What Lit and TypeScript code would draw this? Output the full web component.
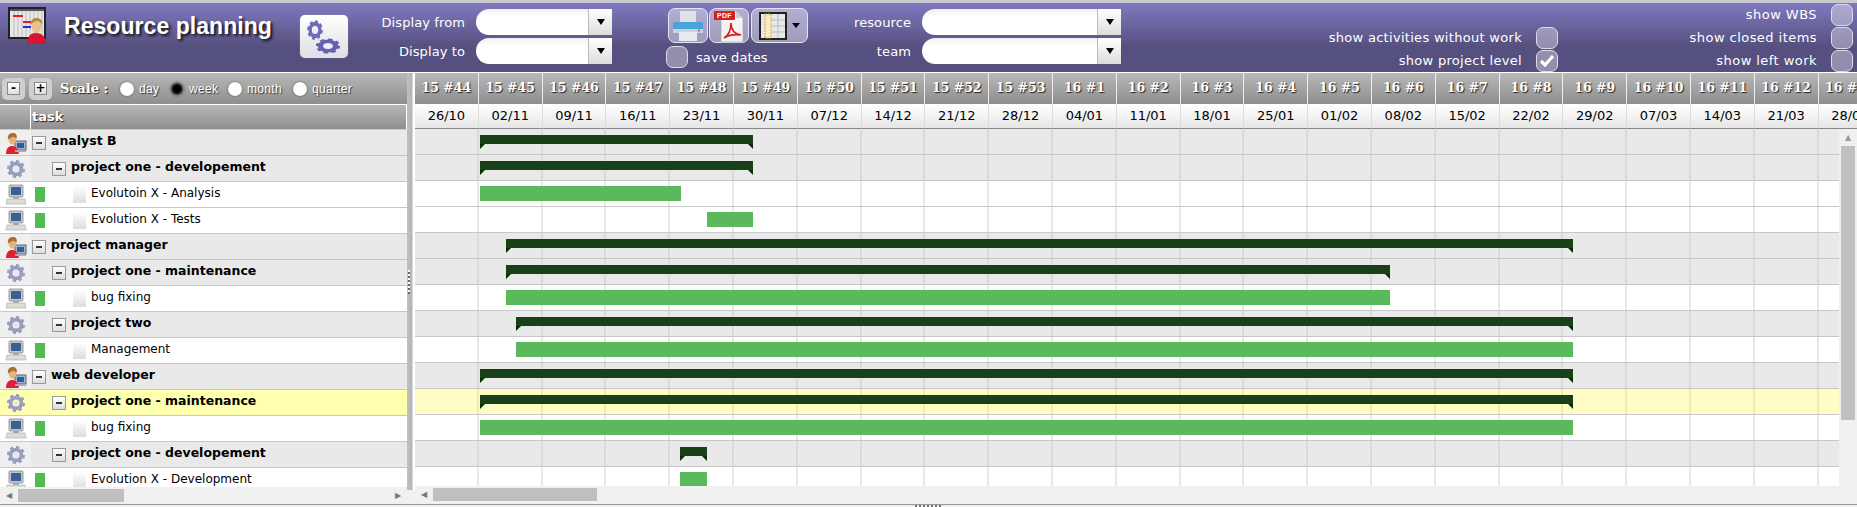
import { LitElement, html, css, svg } from "lit";
import { customElement } from "lit/decorators.js";

const WEEKS = ["15 #44","15 #45","15 #46","15 #47","15 #48","15 #49","15 #50","15 #51","15 #52","15 #53","16 #1","16 #2","16 #3","16 #4","16 #5","16 #6","16 #7","16 #8","16 #9","16 #10","16 #11","16 #12","16 #13"];
const DATES = ["26/10","02/11","09/11","16/11","23/11","30/11","07/12","14/12","21/12","28/12","04/01","11/01","18/01","25/01","01/02","08/02","15/02","22/02","29/02","07/03","14/03","21/03","28/03"];

type Row = { name: string; kind: "res" | "proj" | "task"; from: number; to: number; hl?: boolean };
const ROWS: Row[] = [
  { name: "analyst B", kind: "res", from: 480, to: 753 },
  { name: "project one - developement", kind: "proj", from: 480, to: 753 },
  { name: "Evolutoin X - Analysis", kind: "task", from: 480, to: 681 },
  { name: "Evolution X - Tests", kind: "task", from: 707, to: 753 },
  { name: "project manager", kind: "res", from: 506, to: 1573 },
  { name: "project one - maintenance", kind: "proj", from: 506, to: 1390 },
  { name: "bug fixing", kind: "task", from: 506, to: 1390 },
  { name: "project two", kind: "proj", from: 516, to: 1573 },
  { name: "Management", kind: "task", from: 516, to: 1573 },
  { name: "web developer", kind: "res", from: 480, to: 1573 },
  { name: "project one - maintenance", kind: "proj", from: 480, to: 1573, hl: true },
  { name: "bug fixing", kind: "task", from: 480, to: 1573 },
  { name: "project one - developement", kind: "proj", from: 680, to: 707 },
  { name: "Evolution X - Development", kind: "task", from: 680, to: 707 },
];

const gear = (cx: number, cy: number, r: number, col: string, sw: number) => svg`
  <circle cx=${cx} cy=${cy} r=${r} fill="none" stroke=${col} stroke-width=${sw} stroke-dasharray=${`${r * 0.42} ${r * 0.36}`}/>
  <circle cx=${cx} cy=${cy} r=${r * 0.72} fill="none" stroke=${col} stroke-width=${r * 0.5}/>`;

const iconRes = html`<svg class="ico" width="22" height="22" viewBox="0 0 22 22">
  <rect x="10" y="9" width="11" height="9" fill="#9fb4c8" stroke="#667" stroke-width="1"/>
  <rect x="12" y="11" width="7" height="5" fill="#2d5f9e"/>
  <path d="M1 22c0-6 3-8 6-8s6 2 7 8z" fill="#e02030"/>
  <ellipse cx="7.500" cy="7" rx="4" ry="5.500" fill="#e3b27e"/>
  <path d="M3 7c-1-5 3-6 5-6s4 1 4 5c-2 0-3-2-5-1s-2 2-4 2z" fill="#a8702c"/>
  <rect x="10" y="18" width="11" height="2" fill="#aab"/>
</svg>`;
const iconGear = html`<svg class="ico" width="22" height="22" viewBox="0 0 22 22">
  ${gear(11, 11, 7.5, "#9a9cc0", 3)}<circle cx="11" cy="11" r="2.200" fill="#e4e4ee"/>
</svg>`;
const iconPc = html`<svg class="ico" width="22" height="22" viewBox="0 0 22 22">
  <rect x="4" y="1" width="14" height="12" rx="1" fill="#c4c8cc" stroke="#888" stroke-width=".8"/>
  <rect x="6" y="3" width="10" height="8" fill="#3a5f96"/>
  <rect x="8" y="13" width="6" height="2" fill="#aaa"/>
  <path d="M2 15h18l1 5H1z" fill="#dcdcd8" stroke="#aaa" stroke-width=".6"/>
</svg>`;

const logo = html`<svg width="40" height="37" viewBox="0 0 40 37">
  <rect x="1" y="1" width="36" height="30" fill="#e8e8e8" stroke="#222" stroke-width="2"/>
  <path d="M6 3v27M10 3v27M14 3v27M18 3v27M22 3v27M26 3v27M30 3v27M34 3v27" stroke="#bbb" stroke-width="1"/>
  <rect x="2" y="2" width="34" height="2" fill="#555"/>
  <rect x="5" y="8" width="10" height="2" fill="#e02020"/>
  <rect x="15" y="14" width="8" height="2" fill="#e02020"/>
  <rect x="15" y="19" width="8" height="2" fill="#2030d0"/>
  <path d="M19 37c0-8 4-11 9-11s10 3 10 11z" fill="#d8152c"/>
  <ellipse cx="28.500" cy="19" rx="5" ry="7" fill="#e8c090"/>
  <path d="M23 18c-1-6 3-7 6-7s6 2 5 7c-1-3-3-4-5-4s-4 1-6 4z" fill="#b88a3c"/>
</svg>`;

const gears = html`<svg width="48" height="43" viewBox="0 0 48 43">
  <g transform="translate(15 15) scale(.8 1)">${gear(0, 0, 8.5, "#6f6cbc", 2.5)}<circle r="3" fill="#eeeef4"/></g>
  <g transform="translate(28 31) scale(1.250 .78)">${gear(0, 0, 8.5, "#6460b4", 2.5)}<circle r="3" fill="#eeeef4"/></g>
</svg>`;
const printer = html`<svg width="32" height="32" viewBox="0 0 32 32">
  <rect x="8" y="1" width="16" height="12" fill="#dde2e6"/>
  <path d="M3 12h26a2 2 0 0 1 2 2v9H1v-9a2 2 0 0 1 2-2z" fill="#4aa3dd"/>
  <rect x="1" y="19" width="30" height="4" fill="#c8d4da"/>
  <rect x="7" y="22" width="18" height="9" fill="#e8ecee"/>
  <circle cx="27" cy="20.500" r="1" fill="#d04030"/>
</svg>`;
const pdf = html`<svg width="32" height="34" viewBox="0 0 32 34">
  <path d="M8 2h15l7 7v24H8z" fill="#f4f4f4" stroke="#aaa" stroke-width=".8"/>
  <path d="M23 2v7h7z" fill="#ccc"/>
  <rect x="1" y="2" width="21" height="9" rx="1" fill="#d81c20"/>
  <text x="11.500" y="9.300" class="pdft">PDF</text>
  <path d="M11 29c5-3 7-9 7-15 0 6 3 11 10 12-7-1-12 0-17 3z" fill="none" stroke="#d81c20" stroke-width="1.700"/>
</svg>`;
const columns = html`<svg width="28" height="28" viewBox="0 0 28 28">
  <rect x="1" y="1" width="26" height="26" fill="#e8e8e8" stroke="#222" stroke-width="2"/>
  <rect x="6" y="2" width="6" height="24" fill="#f6ecc8" stroke="#d8a830" stroke-width="1" stroke-dasharray="2 1"/>
  <path d="M12 8h14M12 14h14M12 20h14M19 2v24" stroke="#bbb" stroke-width="1"/>
</svg>`;

@customElement("app-root")
export class AppRoot extends LitElement {
  static styles = css`
    :host { display: block; width: 1857px; height: 507px; overflow: hidden; background: #f0f0f0;
      font-family: "DejaVu Sans", Verdana, sans-serif; color: #000; }
    .top { height: 3px; background: #c9c9cf; }
    .bar { height: 69px; border-bottom: 1px solid #fff; box-sizing: content-box; display: grid;
      grid-template-columns: 64px 236px 48px 264px 54px 142px 313px 437px 295px;
      background: linear-gradient(#8079bf 0, #56507f 44px, #54507f 100%); color: #fff; font-size: 13px; letter-spacing: .3px; }
    .logo { padding: 4px 0 0 8px; }
    .title { font: bold 23px "Liberation Sans", Arial, sans-serif; letter-spacing: .05px; padding-top: 10px; color: #fff;
      text-shadow: 2px 2px 3px #111; white-space: nowrap; }
    .gearbtn { margin-top: 12px; height: 43px; border-radius: 5px; background: linear-gradient(#fff, #dedee4);
      border: 0; box-shadow: 0 0 1px #aaa; }
    .form { display: grid; grid-template-rows: 26px 26px; row-gap: 3px; column-gap: 11px; padding-top: 6px;
      justify-content: end; align-items: center; text-align: right; white-space: nowrap; letter-spacing: .1px; }
    .f1 { grid-template-columns: auto 136px; }
    .f2 { grid-template-columns: auto 199px; }
    .combo { height: 26px; display: flex; background: linear-gradient(#f0f0f0, #fff 8px); border-radius: 13px 0 0 13px;
      overflow: hidden; justify-content: flex-end; }
    .drop { width: 24px; display: flex; align-items: center; justify-content: center;
      background: linear-gradient(#fff, #dcdcdc); border-left: 1px solid #bbb; box-sizing: border-box; }
    .drop::after { content: ""; border: 4px solid transparent; border-top: 6px solid #000; border-bottom: 0; }
    .tools { padding-top: 5px; }
    .tb { display: flex; gap: 1px; padding-left: 2px; }
    .tbtn { height: 33px; width: 38px; border: 1px solid #e6e4f2; border-radius: 7px; display: flex; align-items: center;
      justify-content: center; background: rgba(255, 255, 255, .42); gap: 5px; }
    .tbtn.wide { width: 55px; margin-left: 1px; }
    .tbtn.wide::after { content: ""; border: 4px solid transparent; border-top: 5px solid #000; border-bottom: 0; }
    .pdft { font: bold 7px "Liberation Sans", sans-serif; fill: #fff; text-anchor: middle; }
    .save { display: flex; align-items: center; gap: 8px; margin-top: 3px; white-space: nowrap; letter-spacing: .1px; }
    .chk { width: 20px; height: 20px; border: 1px solid #dcdcec; border-radius: 7px; background: rgba(255, 255, 255, .36);
      flex: none; display: flex; align-items: center; justify-content: center; }
    .opts { display: grid; grid-auto-rows: 23px; justify-items: end; align-items: center; white-space: nowrap; }
    .o2 { letter-spacing: .45px; }
    .opt { display: flex; align-items: center; gap: 14px; }
    .main { display: flex; height: 431px; }
    .left { width: 407px; flex: none; display: flex; flex-direction: column; }
    .scale { height: 31px; background: linear-gradient(#b8b8b8, #8e8e8e); display: flex; align-items: center;
      color: #fff; font-size: 12px; padding-left: 2px; box-sizing: border-box; }
    .pm { width: 23px; height: 22px; border-radius: 5px; background: #cfcfcf; display: flex; align-items: center; justify-content: center;
      margin-right: 4px; flex: none; }
    .pm span { width: 13px; height: 13px; background: linear-gradient(#fff, #ddd); border: 1px solid #888; box-sizing: border-box;
      color: #000; font: bold 12px/10px "DejaVu Sans", sans-serif; text-align: center; }
    .scl { font: bold 13px "DejaVu Serif", serif; text-shadow: 1px 1px 1px #222; width: 60px; padding-left: 4px; white-space: nowrap; flex: none; }
    .rad { display: flex; align-items: center; font-size: 12px; font-family: "Liberation Sans", sans-serif; letter-spacing: .3px; text-shadow: 1px 1px 1px #333; flex: none; }
    .rad i { display: block; width: 14px; height: 14px; border-radius: 50%; background: #fff; box-shadow: 0 0 2px #444; margin-right: 5px; }
    .rad i.on { background: radial-gradient(#000 35%, #555 60%, #fff 85%); }
    .r1 { width: 50px; } .r2 { width: 58px; } .r3 { width: 65px; }
    .thead { height: 26px; display: flex; background: linear-gradient(#b8b8b8, #8e8e8e); border-top: 1px solid #fff; border-bottom: 1px solid #ccc;
      box-sizing: border-box; border-right: 1px solid #fff; }
    .thead b { width: 30px; border-right: 1px solid #fff; flex: none; }
    .thead span { font: bold 13px "DejaVu Sans", sans-serif; color: #fff; text-shadow: 1px 1px 1px #222; line-height: 24px; padding-left: 1px; }
    .tree { height: 357px; overflow: hidden; }
    .tr { height: 26px; box-sizing: border-box; border-bottom: 1px solid #c8c8c8; display: flex; align-items: center; font-size: 12px; white-space: nowrap; background: #fff; }
    .tr > span { margin-top: -4px; }
    .tr.res, .tr.proj { background: linear-gradient(90deg, #efefef 31px, #e9e9e9 31px); font-weight: bold; font-size: 12.500px; }
    .tr.hl { background: #ffffb0; }
    .ico { margin-left: 5px; flex: none; }
    .mn { width: 14px; height: 14px; border: 1px solid #999; box-sizing: border-box; background: linear-gradient(#fff, #ddd); flex: none;
      display: flex; align-items: center; justify-content: center; margin-right: 5px; }
    .mn::after { content: ""; width: 6px; height: 2px; background: #333; }
    .res .mn { margin-left: 5px; }
    .proj .mn { margin-left: 25px; }
    .sq { width: 10px; height: 15px; background: #52bb52; margin-left: 8px; flex: none; }
    .bx { width: 13px; height: 17px; margin: 0 5px 0 28px; background: linear-gradient(#fff, #ddd); flex: none; }
    .hs { height: 16px; background: #f0f0f0; display: flex; align-items: center; }
    .hs .a { width: 18px; text-align: center; color: #777; font-size: 8px; flex: none; }
    .th { height: 13px; background: #bfbfbf; flex: none; }
    .sp { flex: 1; }
    .split { width: 8px; flex: none; height: 417px; background: linear-gradient(90deg, #c0c0c0 0, #b4b4b4 5px, #fff 6px, #fff 100%); display: flex; align-items: center; }
    .split::after { content: ""; width: 2px; height: 24px; margin-left: 1px; background: repeating-linear-gradient(#fff 0 2px, #666 2px 4px); }
    .right { flex: 1; min-width: 0; display: flex; flex-direction: column; overflow: hidden; }
    .grid { display: grid; grid-template-columns: repeat(23, 63.800px); width: 1467.400px; }
    .wk { height: 31px; box-sizing: border-box; border-right: 1px solid #eee; background: linear-gradient(#b8b8b8, #8e8e8e); color: #fff;
      font: bold 12.500px/30px "DejaVu Serif", serif; text-align: center; text-shadow: 1px 1px 1px #222; white-space: nowrap; }
    .dt { height: 25px; box-sizing: border-box; border-right: 1px solid #ddd; border-bottom: 1px solid #888; background: linear-gradient(#fff, #e6e6e6);
      font-size: 13px; line-height: 24px; text-align: center; }
    .bodywrap { display: flex; height: 357px; }
    .gbody { flex: none; width: 1424px; overflow: hidden; }
    .gr { position: relative; height: 26px; box-sizing: border-box; border-bottom: 1px solid #c8c8c8; background: #fff; }
    .gr.sum { background: #e9e9e9; }
    .gr.sum .c { border-right: 2px solid #dadada; }
    .gr.sumhl { background: #fffdc4; }
    .gr.sumhl .c { border-right: 2px solid #eeeab0; }
    .c { height: 25px; box-sizing: border-box; border-right: 2px solid #e8e8e8; }
    .g1 { position: absolute; top: 5px; height: 15px; background: #59b95b; }
    .g2 { position: absolute; top: 6px; height: 9px; background: #1a4017; }
    .g2::before, .g2::after { content: ""; position: absolute; top: 9px; border-top: 5px solid #003000; }
    .g2::before { left: 0; border-right: 5px solid transparent; }
    .g2::after { right: 0; border-left: 5px solid transparent; }
    .vs { width: 18px; flex: none; background: #f0f0f0; margin-top: 1px; display: flex; flex-direction: column; align-items: center; }
    .vs .up { height: 16px; color: #999; font-size: 8px; line-height: 16px; }
    .vs .vt { width: 14px; height: 274px; background: #bfbfbf; }
    .foot { height: 4px; background: #efefef; border-top: 1px solid #999; box-sizing: content-box; display: flex; justify-content: center; }
    .foot::after { content: ""; width: 28px; height: 3px; background: repeating-linear-gradient(90deg, #777 0 2px, #eee 2px 4px); }
  `;

  private combo() { return html`<div class="combo"><div class="drop"></div></div>`; }
  private opt(label: string, on = false) {
    return html`<div class="opt"><span>${label}</span><div class="chk">${on ? html`<svg width="16" height="14" viewBox="0 0 16 14"><path d="M2 7l4 4 8-9" fill="none" stroke="#fff" stroke-width="3.200"/></svg>` : ""}</div></div>`;
  }

  render() {
    return html`
      <div class="top"></div>
      <div class="bar">
        <div class="logo">${logo}</div>
        <div class="title">Resource planning</div>
        <div class="gearbtn">${gears}</div>
        <div class="form f1"><span>Display from</span>${this.combo()}<span>Display to</span>${this.combo()}</div>
        <div></div>
        <div class="tools">
          <div class="tb"><div class="tbtn">${printer}</div><div class="tbtn">${pdf}</div><div class="tbtn wide">${columns}</div></div>
          <div class="save"><div class="chk"></div><span>save dates</span></div>
        </div>
        <div class="form f2"><span>resource</span>${this.combo()}<span>team</span>${this.combo()}</div>
        <div class="opts"><span></span>${this.opt("show activities without work")}${this.opt("show project level", true)}</div>
        <div class="opts o2">${this.opt("show WBS")}${this.opt("show closed items")}${this.opt("show left work")}</div>
      </div>
      <div class="main">
        <div class="left">
          <div class="scale">
            <div class="pm"><span>-</span></div><div class="pm"><span>+</span></div>
            <span class="scl">Scale :</span>
            <label class="rad r1"><i></i>day</label><label class="rad r2"><i class="on"></i>week</label>
            <label class="rad r3"><i></i>month</label><label class="rad"><i></i>quarter</label>
          </div>
          <div class="thead"><b></b><span>task</span></div>
          <div class="tree">
            ${ROWS.map((r) => html`<div class="tr ${r.kind} ${r.hl ? "hl" : ""}">
              ${r.kind === "res" ? iconRes : r.kind === "proj" ? iconGear : iconPc}
              ${r.kind === "task" ? html`<div class="sq"></div><div class="bx"></div>` : html`<div class="mn"></div>`}
              <span>${r.name}</span></div>`)}
          </div>
          <div class="hs"><span class="a">◀</span><div class="th" style="width:106px"></div><span class="sp"></span><span class="a">▶</span></div>
        </div>
        <div class="split"></div>
        <div class="right">
          <div class="grid">${WEEKS.map((w) => html`<div class="wk">${w}</div>`)}</div>
          <div class="grid">${DATES.map((d) => html`<div class="dt">${d}</div>`)}</div>
          <div class="bodywrap">
            <div class="gbody">
              ${ROWS.map((r) => html`<div class="gr ${r.hl ? "sumhl" : r.kind !== "task" ? "sum" : ""}">
                <div class="grid">${WEEKS.map(() => html`<div class="c"></div>`)}</div>
                <div class="${r.kind === "task" ? "g1" : "g2"}" style="left:${r.from - 415}px;width:${r.to - r.from}px"></div>
              </div>`)}
            </div>
            <div class="vs"><span class="up">▲</span><div class="vt"></div></div>
          </div>
          <div class="hs"><span class="a">◀</span><div class="th" style="width:164px"></div></div>
        </div>
      </div>
      <div class="foot"></div>
    `;
  }
}
